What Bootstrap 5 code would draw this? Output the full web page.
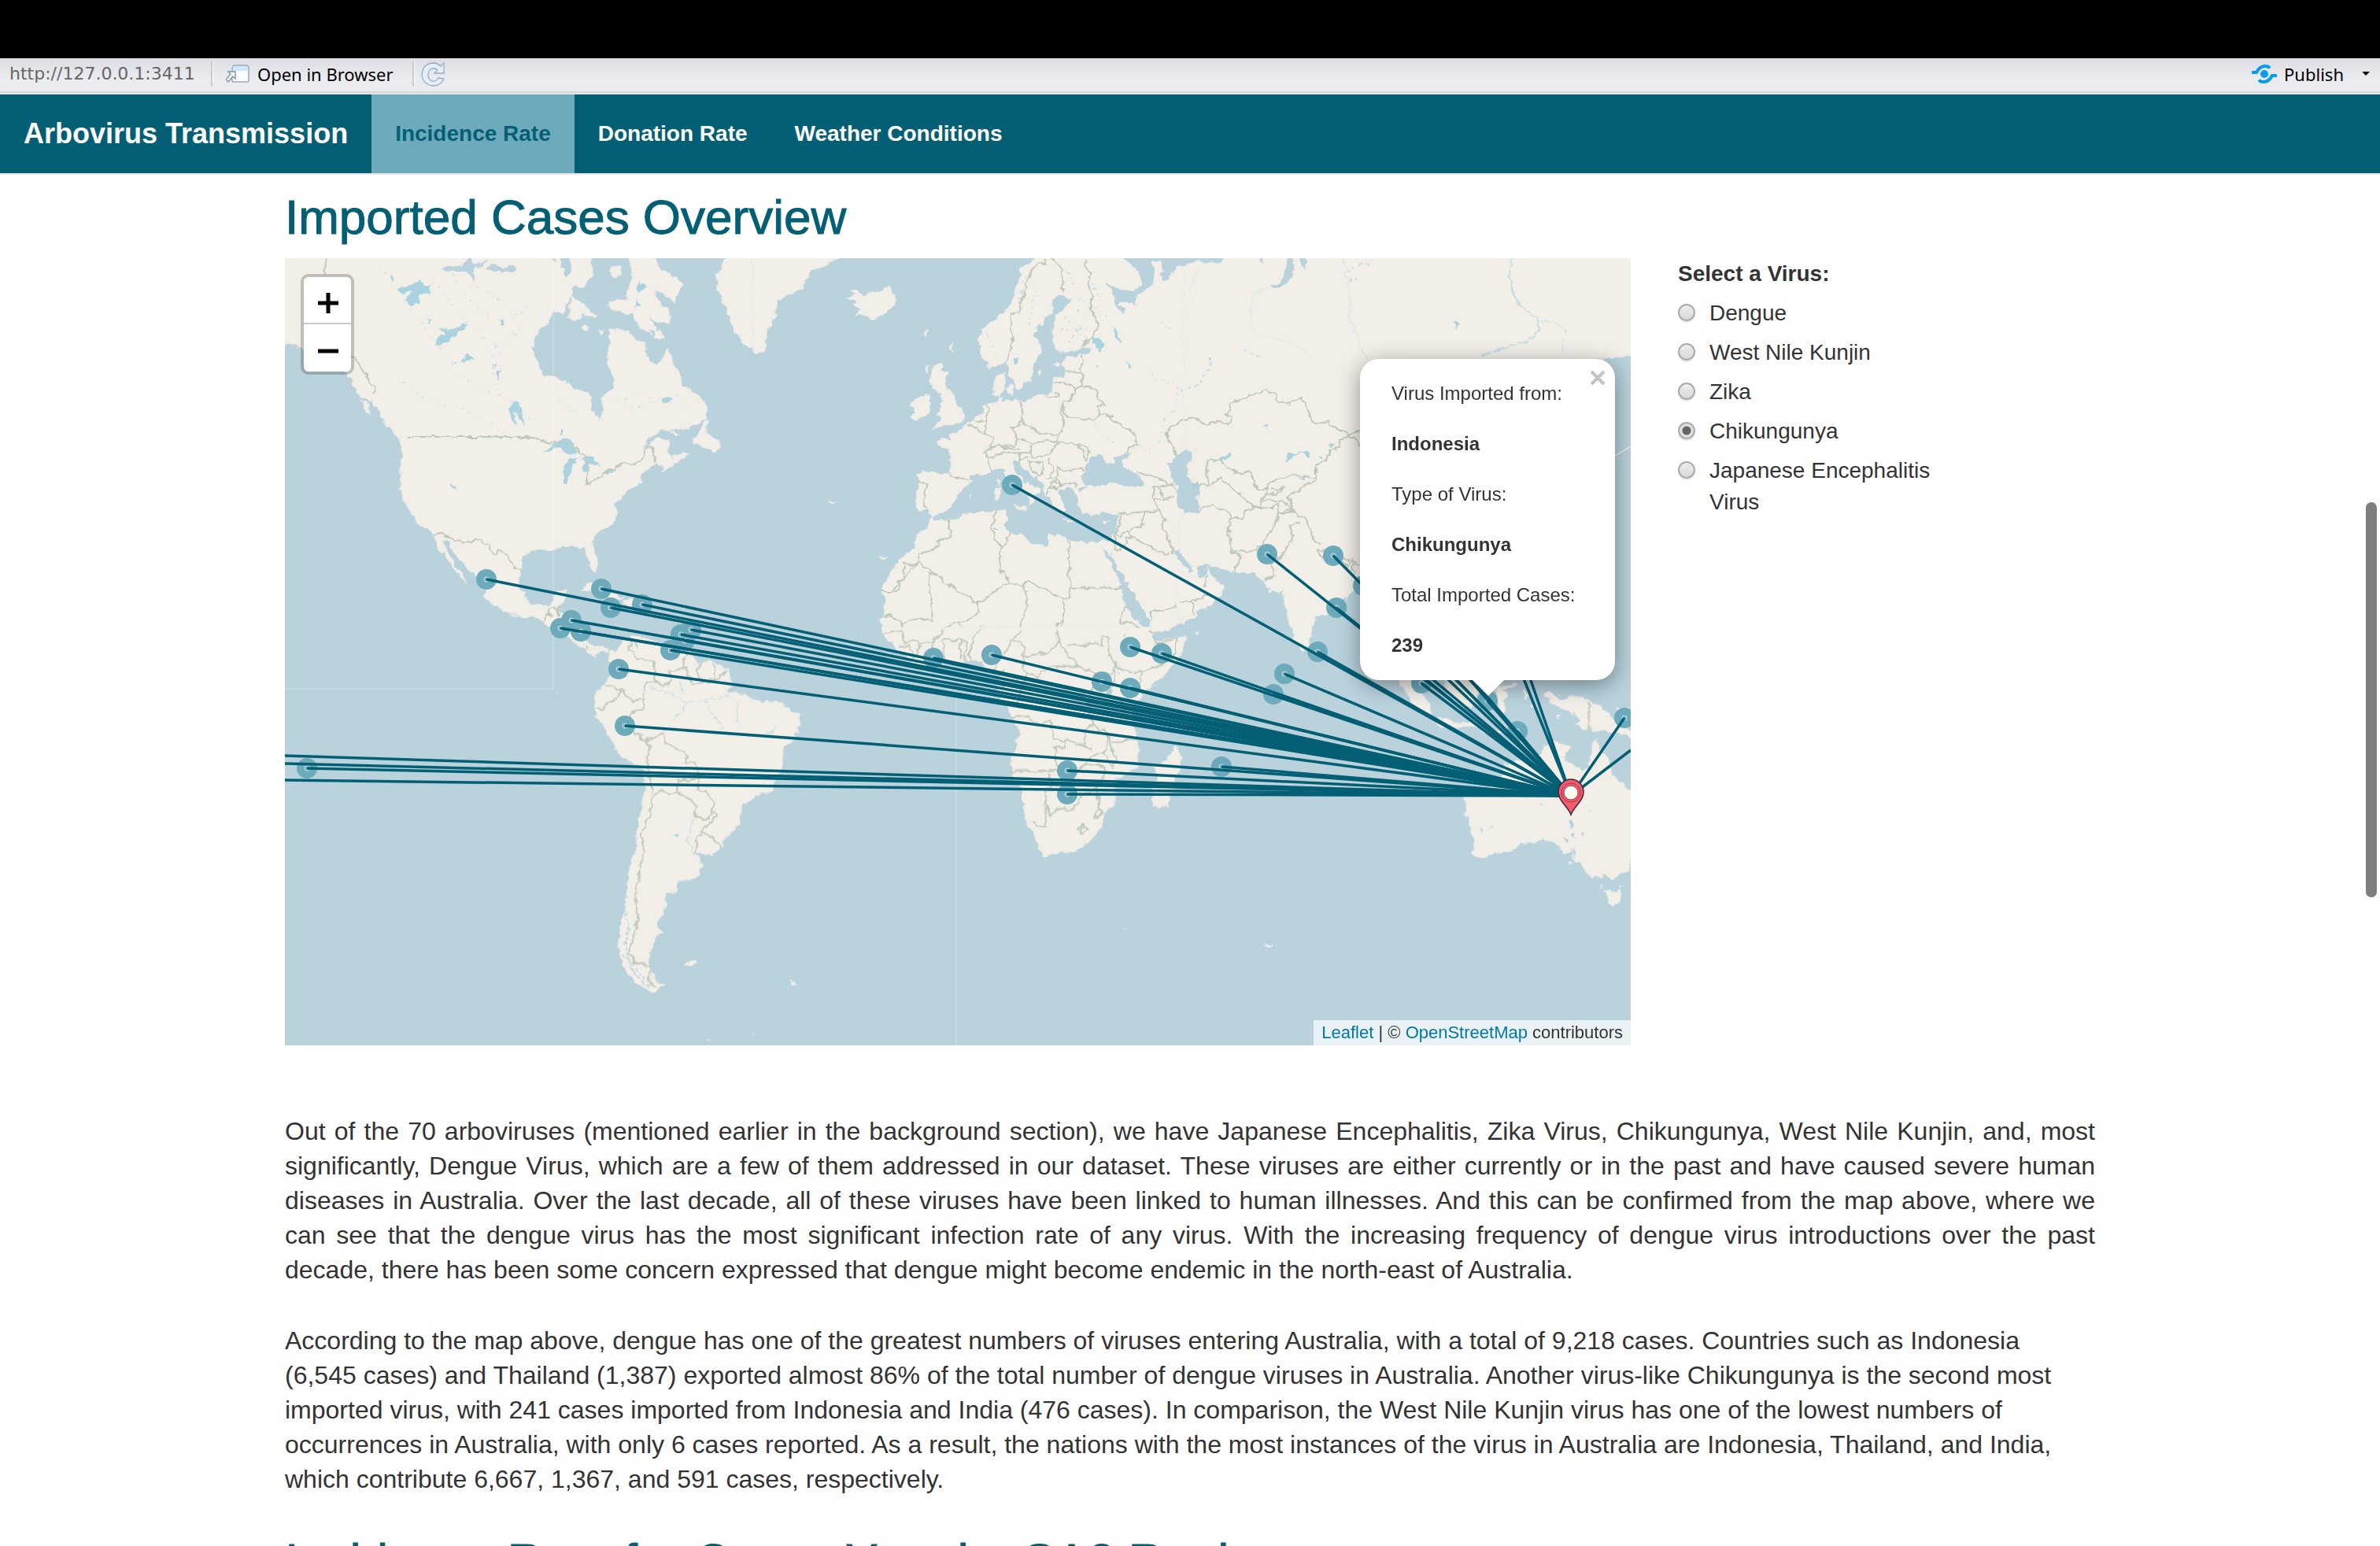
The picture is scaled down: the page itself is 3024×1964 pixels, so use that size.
<!DOCTYPE html>
<html lang="en">
<head>
<meta charset="utf-8">
<meta name="viewport" content="width=device-width, initial-scale=1">
<title>Arbovirus Transmission</title>
<link href="https://cdn.jsdelivr.net/npm/bootstrap@5.3.0/dist/css/bootstrap.min.css" rel="stylesheet">
<script src="https://cdn.jsdelivr.net/npm/bootstrap@5.3.0/dist/js/bootstrap.bundle.min.js"></script>
<style>
  :root { --teal: #045f75; --teal-light: #6daabc; }
  body { font-family: "Liberation Sans", Arial, sans-serif; font-size: 28px; line-height: 40px; color: #333; background: #fff; }
  .title-strip { height: 74px; background: #000; }
  .viewer-bar { height: 46px; font-family: "Noto Sans", sans-serif; font-size: 22px; line-height: 40px; color: #000;
    background: linear-gradient(#dcdde2, #ebecf0 60%); border-bottom: 2px solid #e8e9ec; box-shadow: inset 0 -2px #d6d7da; padding: 0 10px 4px 12px; }
  .viewer-bar button { border: 0; background: none; padding: 0; color: #000; line-height: 40px; }
  .viewer-url { font-family: "DejaVu Sans", sans-serif; color: #666; width: 256px; }
  .bar-rule { width: 3px; height: 32px; background: linear-gradient(90deg, #c9cacf 67%, #fff 67%); }
  .main-nav { background: var(--teal); border-bottom: 2px solid #e7e7e7; height: 102px; font-weight: 700; }
  .main-nav .navbar-brand { font-size: 36px; line-height: 100px; color: #fff; padding: 0 30px; margin: 0; }
  .main-nav .navbar-nav .nav-link { font-size: 28px; line-height: 100px; color: #fff; padding: 0 30px; }
  .main-nav .navbar-nav .nav-link.active { background: var(--teal-light); color: var(--teal); }
  .page-col { max-width: 2360px; padding: 0 30px; }
  .page-col > .row { --bs-gutter-x: 60px; }
  .page-col h2 { font-size: 62px; line-height: 66px; font-weight: 400; color: var(--teal); -webkit-text-stroke: 1px var(--teal); margin: 21px 0 19px; }
  .world-map { aspect-ratio: 171 / 100; background: #b9d2dc; }
  .world-map > svg { width: 100%; height: 100%; }
  .land { fill: #f2efe9; stroke: #e6e8e5; stroke-width: 1; }
  .sea { fill: #b9d2dc; }
  .lake { fill: #aad3df; }
  .edge { fill: none; stroke: #bfc8bb; stroke-width: 2; }
  .edge, .land { vector-effect: non-scaling-stroke; }
  .seam { stroke: #fff; stroke-opacity: .35; stroke-width: 1; fill: none; }
  .routes { stroke: var(--teal); stroke-width: 3.5; fill: none; }
  .zoom-ctl { top: 20px; left: 20px; border: 4px solid rgba(0,0,0,.2); border-radius: 10px; background-clip: padding-box; overflow: hidden; }
  .zoom-ctl button { width: 60px; height: 58px; border: 0; background: #fff; padding: 8px 0 0 2px; }
  .zoom-ctl button + button { height: 62px; border-top: 2px solid #ccc; }
  .map-popup { left: 1366px; top: 128px; width: 324px; padding: 27px 20px 27px 40px; background: #fff; border-radius: 24px;
    box-shadow: 0 6px 28px rgba(0,0,0,.4); font-size: 24px; line-height: 34px; }
  .map-popup p { margin: 0 0 30px; }
  .map-popup p:last-of-type { margin: 0; }
  .map-popup .popup-x { top: 14px; right: 12px; width: 20px; height: 20px; border: 0; background: none; padding: 0; }
  .map-popup .popup-tip { left: 142px; top: 407px; width: 42px; height: 22px; }
  .map-credit { right: 0; bottom: 0; font-size: 22px; line-height: 32px; background: rgba(255,255,255,.7); padding: 0 10px; }
  .map-credit a { color: #0078a8; text-decoration: none; }
  .virus-pick { max-width: 360px; }
  .virus-pick legend { font-size: 28px; line-height: 40px; font-weight: 700; margin: 0 0 10px; float: none; }
  .virus-pick label { margin-bottom: 10px; gap: 18px; }
  .virus-pick input { appearance: none; flex: none; width: 22px; height: 22px; margin: 8px 0 0; border: 2px solid #aaa; border-radius: 50%;
    background: linear-gradient(#eee, #d9d9d9); box-shadow: 0 2px 1px #e8e8e8; }
  .virus-pick input:checked { background: radial-gradient(#666 0 5px, #e0e0e0 6px); }
  .prose { font-size: 32px; line-height: 44px; margin: 87px 0 49px; }
  .prose p { margin: 0 0 46px; }
  .prose p:first-child { text-align: justify; }
  .prose p:last-child { margin: 0; }
  .scroll-thumb { right: 4px; top: 638px; width: 14px; height: 502px; border-radius: 7px; background: #7f7f7f; }
</style>
</head>
<body>
<div class="d-flex flex-column vh-100 overflow-hidden position-relative">
  <div class="title-strip flex-shrink-0"></div>
  <div class="viewer-bar d-flex align-items-center flex-shrink-0">
    <span class="viewer-url">http://127.0.0.1:3411</span>
    <span class="bar-rule"></span>
    <button type="button" class="d-flex align-items-center ms-3">
      <svg class="me-2" width="32" height="26" viewBox="1 0 32 26"><path d="M9 6q0-4 4-4h13q4 0 4 4v16q0 1-1 1H10q-1 0-1-1z" fill="#fbfcfe" stroke="#98a8bc" stroke-width="1.5"/><path d="M10 9V6q0-3 3-3h13q3 0 3 3v3z" fill="#cfe5fa"/><path d="M4 10h9v9l-3-3-6 7-3-3 6-7z" fill="#f5f9ff" stroke="#7e96a8" stroke-width="1.4"/></svg>
      Open in Browser
    </button>
    <span class="bar-rule ms-4"></span>
    <button type="button" class="d-flex ms-2" aria-label="Refresh"><svg width="34" height="32" viewBox="2 0 34 32"><path d="M31 2v13H19l4-4q-3-3-7-2-5 2-5 8t5 8q5 1 8-4l7 1q-4 9-13 9-14-1-15-14Q4 3 17 2q6 0 10 4z" fill="#e4edfa" stroke="#9fadbb" stroke-width="1.3"/></svg></button>
    <button type="button" class="d-flex align-items-center ms-auto">
      <svg class="me-2" width="34" height="26" viewBox="0 0 34 26"><g fill="none" stroke="#0a9aea" stroke-width="4"><path d="M1 11h6q4-8 11-8 4 0 6 2.500"/><path d="M33 15h-6q-4 8-11 8-4 0-6-2.500"/></g><circle cx="17" cy="13" r="5" fill="#0a9aea"/></svg>
      Publish
    </button>
    <button type="button" class="ms-4 d-flex" aria-label="Publish options"><svg width="12" height="6" viewBox="2 0 12 6"><path d="M1 0h10L6 5z"/></svg></button>
  </div>

  <nav class="main-nav navbar navbar-expand p-0 flex-shrink-0 align-items-start">
    <a class="navbar-brand" href="#">Arbovirus Transmission</a>
    <div class="navbar-nav">
      <a class="nav-link active" href="#" aria-current="page">Incidence Rate</a>
      <a class="nav-link" href="#">Donation Rate</a>
      <a class="nav-link" href="#">Weather Conditions</a>
    </div>
  </nav>

  <main class="page-col container-fluid flex-shrink-0">
    <h2>Imported Cases Overview</h2>
    <div class="row">
      <div class="col-9">
        <div class="world-map position-relative overflow-hidden">
          <svg viewBox="362 328 1710 1000" preserveAspectRatio="xMidYMid slice" class="d-block" role="img" aria-label="World map of imported cases">
            <defs>
              <filter id="coast" x="340" y="306" width="1754" height="1044" filterUnits="userSpaceOnUse" color-interpolation-filters="sRGB">
                <feTurbulence type="fractalNoise" baseFrequency="0.11" numOctaves="2" seed="4" result="n"/>
                <feDisplacementMap in="SourceGraphic" in2="n" scale="9" xChannelSelector="R" yChannelSelector="G"/>
              </filter>
            </defs>
            <g id="base" filter="url(#coast)">
              <!-- North America -->
              <g transform="translate(360 320) scale(.38265 .33333)">
                <path class="land" d="M-60 -60V345L30 350 60 372 100 400 180 430 225 480 245 540 290 570 320 610 340 660 375 690 385 715 395 765 388 850 390 910 400 950 425 990 445 1035 480 1055 500 1078 515 1125 540 1170 570 1205 580 1235 605 1262 600 1240 575 1200 560 1170 540 1140 528 1100 550 1105 565 1140 590 1180 615 1205 635 1235 660 1270 670 1295 668 1315 690 1340 730 1365 770 1385 810 1395 830 1388 865 1412 890 1435 930 1445 960 1480 1000 1520 1030 1540 1060 1520 1085 1540 1095 1525 1070 1508 1030 1510 1010 1480 995 1450 1000 1410 940 1390 915 1370 930 1330 943 1293 905 1293 893 1325 885 1345 850 1350 820 1340 800 1310 785 1270 783 1230 792 1200 790 1170 815 1145 850 1132 895 1140 905 1125 960 1122 1000 1130 1010 1160 1015 1195 1035 1222 1045 1200 1040 1160 1028 1120 1030 1090 1060 1060 1095 1030 1108 1000 1100 960 1120 940 1145 905 1190 885 1185 850 1215 825 1240 808 1262 815 1255 838 1290 815 1342 775 1330 762 1290 785 1275 760 1280 715 1250 705 1190 755 1210 715 1245 680 1340 675 1400 640 1408 590 1380 550 1330 510 1310 450 1285 395 1275 368 1255 415 1235 435 1205 400 1200 345 1170 335 1150 300 1080 293 1085 340 1080 380 1072 420 1098 480 1090 520 1057 550 1065 600 1050 645 1020 600 1013 535 970 525 930 490 890 473 860 472 850 430 832 400 828 370 835 320 870 280 890 250 900 230 930 235 940 200 960 165 975 180 1000 205 1040 245 1000 240 970 265 945 245 960 170 960 135 1000 130 1028 90 1020 -60Z"/>
                <path class="land" d="M1130 -60 1160 90 1150 130 1135 160 1145 180 1080 190 1080 215 1120 225 1160 240 1185 290 1220 315 1260 340 1255 310 1230 280 1215 245 1250 275 1280 270 1283 230 1250 190 1230 145 1270 165 1295 190 1325 125 1290 90 1250 60 1215 0ZM1090 60 1118 55 1122 85 1100 100 1088 85ZM990 290 1005 275 1018 285 1000 302ZM1045 300 1058 295 1055 318ZM1406 638 1390 670 1370 700 1358 735 1400 740 1440 765 1452 745 1440 715 1420 700 1402 690 1412 650ZM1480 -60 1470 24 1440 80 1440 140 1460 190 1480 250 1500 300 1525 350 1560 365 1600 380V-60ZM330 650 345 655 400 710 385 705ZM258 565 275 570 290 620 268 595ZM985 1283 1020 1265 1070 1282 1095 1300 1130 1318 1090 1322 1055 1290ZM1130 1325 1170 1325 1200 1345 1160 1350 1125 1345ZM1280 680 1320 695 1305 702Z"/>
                <path class="sea" d="M523 68 540 55 590 50 620 24 640 50 680 30 665 50 630 65 640 120 610 75 570 75ZM670 60 700 45 730 60 765 45 770 75 700 75ZM890 0H900V55ZM925 0 950 28 955 80 940 100 925 60ZM1215 300 1235 300 1230 330Z"/>
                <path class="lake" d="M378 140 420 130 455 108 465 130 490 128 485 160 455 165 445 200 420 195 405 180 425 150 380 155ZM512 282 545 300 600 275 615 285 580 310 545 345 505 352 515 318 540 312ZM590 415 615 393 635 405 600 422ZM762 573 780 572 790 600 803 668 790 640 765 610 778 670 765 655 745 605ZM868 765 890 740 930 710 955 712 980 765 940 770 910 750ZM930 880 932 815 950 790 985 785 960 810 955 850 945 887ZM985 785 1030 780 1050 815 1035 815 1015 800 1015 840 990 835 1003 800ZM1003 885 1050 862 1060 855 1040 865 1010 888ZM1060 845 1075 832 1105 832 1090 845ZM710 455 722 450 715 480 708 485ZM555 885 570 895 573 907 560 903ZM722 260 735 258 735 280 724 280ZM915 675 928 680 922 695ZM475 255 492 262 488 270ZM1260 560 1290 555 1280 580 1265 575ZM1175 110 1205 130 1180 150ZM1172 180 1187 200 1170 210ZM355 85 370 100 360 110ZM570 420 576 430 568 432ZM695 430 705 432 702 446Z"/>
                <g fill="none" stroke="#c9e0e5" stroke-width="7" stroke-dasharray="3 21 6 34 2 17" stroke-opacity=".8"><path d="M320 60 440 240 560 430 640 520 750 560 830 650"/><path d="M500 110 560 200 600 260 640 300 720 380 690 470 740 590"/><path d="M380 480 470 560 600 600 740 690"/><path d="M560 90 640 210 720 260 800 210 770 330 680 380 730 470"/><path d="M900 540 960 610 1080 580 1180 540 1260 570 1350 600"/><path d="M1080 560 1160 600 1230 570 1300 540 1370 570"/><path d="M620 130 690 160 790 250 760 330 700 350"/><path d="M240 470 280 540 310 600"/></g>
                <path class="edge" d="M140 0V90M225 395 250 420 280 490 305 515 298 545M412 705H828L850 720 885 728 935 722 975 750 1010 795 1016 840 1003 880 1055 860 1065 842 1100 832 1120 806H1172L1192 790 1205 748 1228 750 1238 802M500 1076H530L560 1095 590 1105H625L632 1095H655L680 1125 692 1145 705 1148 715 1136 735 1140 755 1180 765 1202 792 1210M865 1412 875 1385 890 1388 880 1358H912L925 1345M912 1358V1390"/>
              </g>
              <!-- Europe, North Africa and the Near East -->
              <g transform="translate(960 320) scale(.35714 .33333)">
                <path class="land" d="M1010 -60 1000 24 950 60 930 130 910 200 860 250 800 300 795 350 805 400 835 445 870 430 893 412 898 450 920 500 930 527 945 520 955 500 980 490 985 430 1015 385 1015 350 992 330 1000 290 1050 240 1060 180 1090 160 1118 175 1115 200 1070 240 1055 290 1060 340 1062 370 1100 383 1165 365 1200 365 1195 385 1160 395 1105 400 1090 420 1105 455 1100 475 1080 475 1060 480 1055 530 1040 548 1005 545 945 575 925 560 880 570 868 545 848 545 848 500 855 475 885 460 885 500 872 545 865 575 830 583 810 590 800 620 780 640 745 655 735 680 690 695 690 715 645 715 650 735 685 750 698 790 692 850 660 845 590 838 572 850 580 880 570 950 580 985 610 985 625 1005 615 1045 575 1080 562 1130 510 1175 480 1225 445 1295 460 1320 458 1370 443 1410 455 1446H1412L1450 1445 1500 1420 1572 1390V-60Z"/>
                <path class="sea" d="M622 1008 665 997 700 970 718 935 730 910 765 880 765 850 790 842 820 850 850 823 880 832 895 860 915 890 960 915 978 940 970 975 990 955 1000 925 1015 905 965 880 940 855 915 830 912 795 935 788 950 820 985 850 1025 885 1030 925 1045 935 1065 975 1090 1000 1105 990 1090 950 1075 915 1095 897 1125 905 1145 925 1145 965 1165 995 1205 1003 1240 992 1290 1005 1283 1060 1262 1105 1230 1103 1180 1112 1120 1098 1075 1075 1040 1082 1035 1115 1015 1122 970 1105 960 1080 900 1072 885 1045 895 1020 885 985 850 990 790 992 740 1000 690 1025 640 1022ZM1215 768 1180 800 1160 860 1175 890 1210 895 1260 878 1330 895 1380 890 1370 860 1310 815 1300 800 1340 760 1310 765 1270 785 1275 805 1250 810 1240 785ZM1140 902 1185 897 1160 912ZM1560 755 1525 757 1500 775 1465 810 1480 860 1500 890 1498 970 1530 992 1578 990 1590 920 1582 905 1560 880 1539 846 1539 804ZM1290 -20 1310 24 1350 60 1375 95 1370 130 1340 150 1280 135 1240 110 1265 150 1280 200 1310 240 1320 220 1285 200 1300 190 1350 205 1355 170 1390 145 1415 120 1420 60 1405 40 1440 40 1455 70 1435 90 1450 115 1475 110 1480 80 1520 40 1580 20 1572 -20ZM1232 1120 1262 1165 1270 1140 1268 1165 1300 1220 1335 1290 1370 1350 1400 1400 1410 1450 1450 1445 1420 1470 1400 1440 1350 1400 1310 1340 1305 1280 1270 1200 1250 1165ZM1485 1130 1505 1135 1530 1170 1560 1215 1540 1215 1500 1165Z"/>
                <path class="land" d="M918 968 965 965 955 992ZM850 900 872 895 868 940 852 945ZM855 868 868 860 865 890ZM1092 1020 1130 1026 1120 1032ZM1235 1030 1258 1022 1248 1036ZM635 430 665 428 655 455 688 460 670 500 690 525 710 560 722 590 742 605 738 645 700 658 665 660 628 675 655 645 665 632 640 620 660 605 650 585 668 575 660 540 640 530 625 505 618 480 630 455ZM555 570 590 545 625 545 615 570 620 605 600 625 570 640 552 625 565 605 555 590ZM330 175 350 165 340 145 360 140 385 165 410 150 440 155 460 135 480 140 500 180 485 215 450 240 415 257 385 240 355 238 372 215 340 205 362 190ZM-10 -60V382L28 385 45 290 70 240 75 190 110 170 165 140 190 90 210 65 260 45 330 10 330 -60ZM598 305 612 300 606 320ZM690 360 702 350 697 380ZM605 440 620 435 605 470ZM890 515 912 510 915 540 895 540ZM1005 460 1020 450 1012 475ZM1060 425 1085 425 1078 440ZM760 925 772 930 765 935ZM440 1160 470 1165 450 1170ZM260 950 290 953 270 957Z"/>
                <path class="lake" d="M1195 325 1220 322 1243 355 1225 382 1205 355ZM1270 285 1285 295 1298 345 1280 330ZM918 408 940 402 935 425 920 430ZM1320 410 1337 435 1325 440ZM1208 432 1220 435 1212 443ZM1145 215 1155 220 1148 225ZM845 1052 860 1052 850 1060Z"/>
                <g fill="none" stroke="#bfdbe2" stroke-width="6" stroke-dasharray="4 14 8 18" stroke-opacity=".8"><path d="M1100 250 1190 340M1090 300 1180 290M1120 340 1170 250M1150 180 1250 240M1200 120 1230 200M960 90 930 240M1000 120 970 300M1100 60 1140 140M820 300 860 400"/><path d="M1568 515 1500 525 1495 600 1455 640 1440 720 1390 760 1360 740"/><path d="M1200 640 1240 700 1275 735"/><path d="M1400 450 1420 485 1490 500M1240 1260 1220 1280M1480 290 1430 260"/></g>
                <path class="edge" d="M1035 24V48L1003 45 980 75 955 160 935 230 912 232 908 280 915 360 893 415M1055 24 1092 70 1095 155M1172 24V50L1192 80 1183 110 1197 160 1195 220 1220 280 1200 320 1165 362M1162 395 1158 465 1163 508 1195 518 1210 530 1235 583 1220 590 1225 618 1200 640 1105 628 1090 575 1120 565 1140 525 1163 508M1105 448 1125 455 1155 463M1060 500 1110 502 1140 520M1035 555H1080L1078 540 1060 538M1090 575V625L1100 660 1080 690 1072 725 1040 715 990 730 930 710 912 672 950 650 1010 690 1070 698M943 578 950 645M828 585 815 690 843 705 838 740 925 740 930 712M755 655 810 690M785 645 808 650M838 742 815 765 830 785 860 780 885 760 925 770 975 765 990 735M828 785 830 825 838 835M880 745 940 755M975 765 985 780 1020 780 1050 760 1075 730H1140L1175 740 1192 770 1170 795M1145 730 1168 765V795M1225 618 1265 625 1285 655 1350 685 1355 735 1325 750 1315 765M935 770 940 795 970 785M970 800 1020 805 1022 850 1010 860 975 815ZM1040 785 1060 830 1050 860M1075 820 1090 835 1165 830M1075 825 1070 860 1080 885 1140 880M1030 865 1050 855 1065 870 1045 900 1040 925M1045 880 1080 885V900L1045 900M1140 880 1135 900M690 850 715 860 762 868M577 878 612 882 600 935 605 980M1355 840 1420 855 1465 880M1410 895 1450 895 1490 885M1410 895 1420 940 1450 945 1490 935M1430 900 1455 940M1465 880 1495 900M1290 1000 1385 990 1430 985 1422 940M1385 990 1375 1040 1300 1080 1280 1075M1300 1000 1295 1040 1280 1075 1275 1110 1285 1140 1320 1115 1310 1098 1340 1085 1330 1065M1340 1085 1430 1145 1478 1150M1430 985 1455 1020 1450 1060 1480 1110 1488 1155M1465 720 1460 690 1480 670 1520 635 1568 635M1465 720 1500 775"/>
                <path class="edge" d="M685 1025 697 1082 660 1100 630 1135 580 1150V1190H530L525 1250 510 1255V1293H445M580 1185 485 1290M580 1185 780 1335H800L905 1255 870 1215V1120L837 1060 850 1030V990M875 1120 900 1095V1070M905 1255 950 1272 970 1258 1095 1322V1395L1072 1430 1080 1480 1110 1505M1115 1100V1318H1095M1115 1280H1305M635 1225H615L630 1400H540L525 1415 480 1385H455M790 1335V1375L775 1395 720 1412 660 1435 640 1480M950 1272 968 1320 960 1380 940 1420M775 1440 800 1430 840 1445 890 1435 930 1440 955 1460M525 1415V1450L500 1460 450 1450M1095 1395 1090 1440M1305 1370 1295 1415 1340 1412 1385 1440 1400 1465M1325 1355 1305 1370M1405 1405V1370L1470 1365 1500 1345 1568 1335M1550 1345 1560 1385M725 1412 755 1465"/>
              </g>
              <!-- Asia -->
              <g transform="translate(1500 320) scale(.38265 .35714)">
                <path class="land" d="M10 -60V700L52 705 48 730 22 752 25 790 45 800 40 820 65 845 55 870 62 925 10 932-8 940V1050L10 1090 50 1120 95 1110 105 1120 180 1142 245 1140 275 1170 290 1200 320 1215 340 1200 345 1250 360 1320 385 1390 405 1423 425 1400 440 1340 450 1300 490 1285 540 1240 575 1200 610 1190 700 1250 760 1480 820 1480 1000 1200 1300 900 1300 400 1380 380 1430 375 1560 368V-60Z"/>
                <path class="land" d="M-10 1130 20 1150 60 1160 85 1150 90 1120 100 1150 145 1188 135 1215 100 1255 40 1285-10 1308ZM50 1355 60 1352 65 1360 52 1362ZM420 1405 440 1400 450 1425 435 1440Z"/>
                <path class="sea" d="M0 -20V50L60 30 130 40 160 0V-20ZM240 -20 272 50 285 -20ZM360 -20 350 60 348 90 325 115 290 120 325 132 352 110 375 60 372 -20ZM395 -20 400 50 418 70 412 -20Z"/>
                <path class="lake" d="M350 745 360 715 430 712 432 735 400 718 370 725 358 748ZM395 805 415 800 410 815ZM40 820 70 825 60 850 45 840ZM120 735 170 715 165 730 130 740ZM495 680 515 685 505 692ZM905 250 925 255 912 275ZM275 620 290 615 285 630ZM455 715 475 735 465 735ZM95 375 102 375 95 405ZM110 818 120 815 110 828Z"/>
                <g fill="none" stroke="#c3dde3" stroke-width="4"><path d="M1100 24 1092 80 1105 150 1130 195 1185 235 1190 280 1150 320 1000 365" stroke-width="5"/><path d="M1185 240 1250 255 1275 280 1270 370M540 24 560 130 560 240 600 340 620 380" stroke-opacity=".5"/><path d="M300 130 240 150 230 260 270 300 380 325 440 380M40 170 35 120 60 60" stroke-opacity=".3"/><path d="M555 75 580 50 630 40M560 100 590 98M0 490 60 475 110 390M210 350 260 370" stroke-dasharray="10 14" stroke-width="6"/></g>
                <path class="edge" d="M0 600 30 590 60 600 85 618 105 605 165 612 170 590 150 580 175 535 250 505 285 492 310 500 320 535 350 545 398 518 445 612 490 605 520 630 558 652 596 635M558 652 600 690M558 652 530 670 525 700 495 705 485 745 450 755V810L355 870 370 905 375 925 355 915 325 930M450 800 360 795 320 805 290 830 285 860 265 880 275 910 245 910 150 820 130 805 105 830H90V745L130 740 180 785H235L245 830 275 850 300 825M50 820 90 830M62 915 105 900 165 930 170 950 205 945 220 915 270 905 300 915 320 895 325 930 315 970 290 1010 245 1065 165 1065 200 1085 190 1110 175 1140M165 945 160 1000 170 1065M325 930 375 925 410 950 430 980 435 1010 465 1045M400 965 360 970 375 1010 335 1085 300 1110 315 1155 275 1165M455 1055 465 1085 560 1115 560 1090M455 1055 590 1110M570 1090 575 1150M575 1115H598M300 845 345 840 320 860 285 860M0 1250 45 1240 90 1220M35 1245 45 1285M80 1190 90 1150M270 880 350 890 375 925"/>
              </g>
              <!-- Sub-Saharan Africa -->
              <g transform="translate(1060 800) scale(.35714 .3393)">
                <path class="land" d="M168-10 190 40 230 75 280 120 320 150 350 130 420 125 480 115 520 125 545 150 580 150 585 200 590 260 625 300 640 340 655 380 650 430 625 500 640 560 665 600 670 660 690 720 710 770 728 800 725 825 752 850 790 835 850 832 880 820 920 780 955 730 960 680 1000 655 1000 620 998 560 1080 510 1083 440 1070 390 1060 330 1070 280 1110 230 1180 160 1230 100 1252 25 1200 35 1140 45 1128-10ZM1220 435 1238 490 1220 540 1200 620 1190 660 1160 670 1133 655 1132 600 1150 560 1138 510 1190 480ZM1290 8 1303 12 1295 18ZM1532 1180 1562 1178 1545 1190ZM1036 1118 1042 1122 1036 1124Z"/>
                <path class="lake" d="M970 225 990 225 985 255 970 250ZM915 335 930 360 925 365ZM982 400 992 460 985 455 980 420ZM1010 150 1015 172 1008 170ZM1030 15 1037 22 1028 26Z"/>
                <path class="edge" d="M180 12 240 5 250 45 300 40 305 65 280 105M230 60 265 55 275 95M305 50 350 45 390 0M350 45 355 110M388 38H445L455 110M388 38V90L400 125M450 40 475 50 462 118M480 118 495 30 520 0M575 150 580 110 610 80 640 30 665 0M600 150V170H560M640 40 680 65 670 130 690 165 720 180 740 150 800 135 870 138 810 65 790 0M670 100 760 85 805 40M830 55 880 60 920 50 950 60 955 20 975 30V90L1000 130 985 165 930 165 870 138M690 165 665 210 655 270 630 280M585 210H640L655 180M1000 130 1050 160 1100 155 1170 130 1218 90V35L1150 50 1120 0M1095 160 1085 220 1100 245M1000 130 995 190 975 240 1050 290M915 230 905 290 920 360M930 165 915 230M635 325H690L710 350 770 345 785 410 820 412V440H787V490L800 530H630L625 515M770 540V595H752V735L725 738 700 720M820 412 880 430 910 445 890 430 885 375 920 360 975 390 965 460 920 475 880 510 870 530M990 420 1060 415 1080 405M975 390 985 450 1005 480 990 515 960 465M880 520 900 500 960 510 955 560 930 600 940 620 945 690M755 655 770 695 800 670 850 670 880 620M880 620 930 600M870 530 850 545 800 530M925 685 940 672 950 690 940 702 928 700ZM868 750 885 732 905 742 880 767Z"/>
              </g>
              <!-- South America -->
              <g transform="translate(360 800) scale(.44643 .3393)">
                <path class="land" d="M825 40 860 80 890 102 900 80 920 80 930 110 945 140 920 190 890 240 885 310 910 360 945 440 950 470 1000 500 1028 520 1028 600 1018 680 1005 760 1005 820 985 890 980 950 975 1010 970 1060 955 1120 955 1190 965 1260 1000 1320 1050 1357 1085 1332 1060 1315 1040 1270 1038 1215 1055 1190 1060 1150 1080 1135 1060 1100 1085 1060 1088 985 1115 987 1125 940 1170 930 1192 890 1185 855 1170 835 1220 850 1240 820 1270 760 1297 720 1300 665 1340 625 1390 605 1405 560 1420 510 1422 450 1450 410 1472 360 1468 315 1445 300 1410 272 1350 265 1300 235 1265 235 1280 200 1265 150 1230 125 1180 120 1150 80 1120 60 1060 50 1010 20 965 40 945 85 920 65 885 75 860 60 840 38ZM1142 1250 1160 1235 1180 1242 1160 1258 1148 1257ZM1438 1308 1455 1318 1462 1333 1448 1325ZM775 238 780 238 778 243ZM1210 1532 1220 1535 1212 1537ZM1335 1514 1342 1518 1336 1520Z"/>
                <g fill="none" stroke="#b9d2dc" stroke-width="4"><path d="M975 1060 985 1130 970 1180 985 1230 1000 1290 1040 1340M985 1260 1010 1300M1005 1270 1030 1310M968 1220 990 1250" stroke-dasharray="12 7"/></g>
                <g fill="none" stroke="#c9e0e5" stroke-width="4"><path d="M1270 245 1200 265 1150 275 1100 235 1040 210M1200 265 1215 300 1250 370M1150 275 1110 340M1290 270 1295 360M1170 690 1150 780 1165 840M1130 195V240" stroke-dasharray="16 5"/><path d="M1375 385 1390 380 1405 370" stroke-width="6"/></g>
                <path class="lake" d="M1112 762 1122 758 1122 775ZM1028 488 1038 500 1032 505ZM1000 45 1010 55 1005 72 998 60Z"/>
                <path class="edge" d="M990 25 985 75 1000 105 1055 122 1058 195 1080 212 1105 190 1095 155 1145 145 1140 105 1150 80M915 205 960 225 990 262 1025 265V298L990 310M960 228 950 260 925 275 910 305 893 290M1025 262 1030 200 1058 195M1145 140 1155 180 1170 205 1215 190 1240 185 1258 150M1190 120 1180 160 1190 195M1225 128V190M990 310 985 340 1000 392 1018 388 1020 412 1035 410 1042 440 1035 520 1045 560 1050 615M1035 410 1080 390 1088 430 1145 460 1150 500H1175L1182 605 1205 608 1225 645 1222 690 1205 708 1170 700 1180 660 1120 608 1100 612 1070 600 1060 620 1045 650V700L1025 740 1018 780 1028 830 1010 900 1015 930 1000 970 1008 1070 1000 1150 985 1185V1215L998 1220V1250L1042 1257V1332H1062M1120 608 1125 565 1175 560M1225 670 1235 695 1190 755 1178 780 1172 840M1190 755 1225 780 1240 805 1238 825"/>
                <path class="edge" d="M862 58V82M925 75 932 100"/>
              </g>
              <!-- Indonesia and Australia -->
              <g transform="translate(1600 800) scale(.33333 .3393)">
                <path class="land" d="M500 150 530 190 560 240 600 300 650 322 652 275 610 230 580 150ZM715 150 708 230 740 260 770 285 810 290 830 250 870 150ZM660 340 700 332 760 350 820 348 835 365 760 368 690 358ZM900 215 940 212 980 195 985 205 945 222 925 225 945 245 925 262 940 300 925 320 918 290 908 270ZM840 372 870 372 900 378 950 376 945 386 860 384ZM955 400 1010 375 1000 392 960 410ZM1085 238 1120 235 1140 265 1200 250 1270 270 1330 310 1370 350 1450 400V412L1370 385 1290 378 1240 370 1200 360 1225 340 1190 310 1150 290 1110 270ZM1010 220 1025 250 1015 262ZM1035 280 1060 285 1040 290ZM1135 325 1148 318 1140 335ZM1360 290 1385 300 1370 315ZM780 625 790 660 785 690 800 730 820 790 812 835 850 858 890 835 960 830 1000 800 1080 785 1130 795 1165 850 1195 815 1190 855 1225 870 1240 910 1300 935 1320 915 1345 938 1380 915 1408 905 1416 860 1470 820V612L1400 605 1385 575 1345 545 1330 480 1300 450 1280 405 1265 450 1255 520 1235 527 1160 485 1185 435 1110 418 1090 430 1065 470 1040 495 1000 475 960 510 940 500 920 550 880 590 800 605ZM1315 975 1350 985 1380 975 1378 1010 1350 1043 1330 1020ZM20 1178 52 1180 35 1190ZM1175 868 1200 870 1185 877ZM1300 955 1308 955 1304 965ZM1370 958 1380 960 1376 970Z"/>
                <path class="lake" d="M1180 715 1192 712 1195 735 1185 738ZM1195 762 1205 768 1195 780ZM1228 765 1240 768 1235 778ZM1155 780 1180 785 1172 798ZM1062 650 1085 652 1075 660ZM880 735 892 735 885 745ZM845 740 852 745 848 770ZM1258 680 1266 684 1260 688Z"/>
                <path class="sea" d="M1195 815 1212 835 1205 860 1198 845Z"/>
                <path class="edge" d="M1257 270V378"/>
              </g>
            </g>
            <path class="seam" d="M703 328V875H362M1215 880V1328"/>
            <path d="M2052 579 2072 567" stroke="#e4e8e6" stroke-width="2"/>
            <g id="dots" fill="#6daabc"></g>
            <g id="rings" fill="none" stroke="#d5e6ea" stroke-width="1"></g>
            <g id="routes" class="routes"></g>
            <g stroke="#3b2b3c" stroke-width="1">
              <path d="M1996 1035C1992 1024 1980 1018 1980 1006A16 16 0 0 1 2012 1006C2012 1018 2000 1024 1996 1035Z" fill="#f15b6c" stroke-width="1.500"/>
              <circle cx="1996" cy="1007" r="12" fill="#f15b6c" stroke="#a8364a"/>
              <circle cx="1996" cy="1007" r="9" fill="#fffdf0" stroke="#a8364a"/>
            </g>
          </svg>

          <div class="zoom-ctl position-absolute d-flex flex-column">
            <button type="button" aria-label="Zoom in"><svg width="26" height="26" viewBox="0 0 26 26" class="d-block mx-auto"><path d="M0 13h26M13 0v26" stroke="#000" stroke-width="5"/></svg></button>
            <button type="button" aria-label="Zoom out"><svg width="26" height="26" viewBox="0 0 26 26" class="d-block mx-auto"><path d="M0 13h26" stroke="#000" stroke-width="5"/></svg></button>
          </div>

          <div class="map-popup position-absolute">
            <button type="button" class="popup-x position-absolute" aria-label="Close popup"><svg width="20" height="20" viewBox="0 0 20 20" class="d-block"><path d="M2 2l16 16M18 2 2 18" stroke="#c3c3c3" stroke-width="4"/></svg></button>
            <p>Virus Imported from:</p>
            <p><b>Indonesia</b></p>
            <p>Type of Virus:</p>
            <p><b>Chikungunya</b></p>
            <p>Total Imported Cases:</p>
            <p><b>239</b></p>
            <svg class="popup-tip position-absolute" viewBox="0 0 42 22"><path d="M0 0h42L21 21z" fill="#fff"/></svg>
          </div>

          <div class="map-credit position-absolute"><a href="#">Leaflet</a> | © <a href="#">OpenStreetMap</a> contributors</div>
        </div>
      </div>
      <div class="col-3">
        <fieldset class="virus-pick">
          <legend>Select a Virus:</legend>
          <label class="d-flex align-items-start"><input type="radio" name="virus">Dengue</label>
          <label class="d-flex align-items-start"><input type="radio" name="virus">West Nile Kunjin</label>
          <label class="d-flex align-items-start"><input type="radio" name="virus">Zika</label>
          <label class="d-flex align-items-start"><input type="radio" name="virus" checked>Chikungunya</label>
          <label class="d-flex align-items-start"><input type="radio" name="virus">Japanese Encephalitis Virus</label>
        </fieldset>
      </div>
    </div>
    <div class="prose">
      <p>Out of the 70 arboviruses (mentioned earlier in the background section), we have Japanese Encephalitis, Zika Virus, Chikungunya, West Nile Kunjin, and, most significantly, Dengue Virus, which are a few of them addressed in our dataset. These viruses are either currently or in the past and have caused severe human diseases in Australia. Over the last decade, all of these viruses have been linked to human illnesses. And this can be confirmed from the map above, where we can see that the dengue virus has the most significant infection rate of any virus. With the increasing frequency of dengue virus introductions over the past decade, there has been some concern expressed that dengue might become endemic in the north-east of Australia.</p>
      <p>According to the map above, dengue has one of the greatest numbers of viruses entering Australia, with a total of 9,218 cases. Countries such as Indonesia (6,545 cases) and Thailand (1,387) exported almost 86% of the total number of dengue viruses in Australia. Another virus-like Chikungunya is the second most imported virus, with 241 cases imported from Indonesia and India (476 cases). In comparison, the West Nile Kunjin virus has one of the lowest numbers of occurrences in Australia, with only 6 cases reported. As a result, the nations with the most instances of the virus in Australia are Indonesia, Thailand, and India, which contribute 6,667, 1,367, and 591 cases, respectively.</p>
    </div>
    <h2>Incidence Rate for Cases Year by SA2 Region</h2>
  </main>
  <div class="scroll-thumb position-absolute"></div>
</div>
<script>
  // Countries of origin on the map canvas, each joined to the Australian marker
  const home = [1996, 1011];
  const origins = [[618,736],[764,748],[816,768],[776,772],[726,788],[712,798],[738,802],[878,800],[865,806],[870,814],[852,826],
    [786,850],[794,922],[390,976],[1186,836],[1260,832],[1400,866],[1436,874],[1436,822],[1476,830],[1356,979],[1356,1009],
    [1552,974],[1286,616],[1610,704],[1694,706],[1732,744],[1698,772],[1674,828],[1632,856],[1618,882],[1806,868],[1890,890],
    [1928,929],[2064,912]];
  // Routes whose origin lies outside the view or behind the popup
  const farRoutes = [[362,960],[362,970],[362,991],[2072,953],[1800,846],[1826,850],[1856,850],[1860,850],[1931,850],[1940,850]];
  const ns = 'http://www.w3.org/2000/svg';
  const add = (id, tag, attrs) => {
    const el = document.createElementNS(ns, tag);
    for (const k in attrs) el.setAttribute(k, attrs[k]);
    document.getElementById(id).appendChild(el);
  };
  origins.forEach(([x, y]) => {
    add('dots', 'circle', { cx: x, cy: y, r: 13 });
    add('rings', 'circle', { cx: x, cy: y, r: 3 });
  });
  origins.concat(farRoutes).forEach(([x, y]) => add('routes', 'line', { x1: x, y1: y, x2: home[0], y2: home[1] }));
</script>
</body>
</html>
